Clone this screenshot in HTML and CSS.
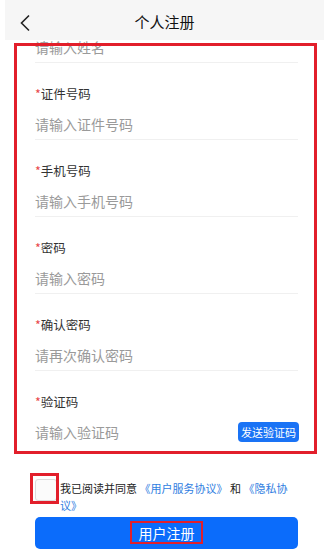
FILE: index.html
```html
<!DOCTYPE html>
<html>
<head>
    <meta charset="utf-8">
    <title>个人注册</title>
    <link rel="stylesheet" href="styles.css">
</head>
<body>
    <div class="page">

        <div class="header">
            <span class="back">
                <svg width="12" height="18" viewBox="0 0 12 18">
                    <polyline points="10,1.5 2.5,9 10,16.5" fill="none" stroke="#222" stroke-width="1.6"/>
                </svg>
            </span>
            <span class="title">个人注册</span>
        </div>

        <div class="scroll">
            <div class="form">
                <div class="field">
                    <div class="label"><span class="star">*</span>姓名</div>
                    <input type="text" class="input" placeholder="请输入姓名">
                </div>
                <div class="field">
                    <div class="label"><span class="star">*</span>证件号码</div>
                    <input type="text" class="input" placeholder="请输入证件号码">
                </div>
                <div class="field">
                    <div class="label"><span class="star">*</span>手机号码</div>
                    <input type="text" class="input" placeholder="请输入手机号码">
                </div>
                <div class="field">
                    <div class="label"><span class="star">*</span>密码</div>
                    <input type="password" class="input" placeholder="请输入密码">
                </div>
                <div class="field">
                    <div class="label"><span class="star">*</span>确认密码</div>
                    <input type="password" class="input" placeholder="请再次确认密码">
                </div>
                <div class="field last">
                    <div class="label"><span class="star">*</span>验证码</div>
                    <div class="code-row">
                        <input type="text" class="input" placeholder="请输入验证码">
                        <button class="send-btn">发送验证码</button>
                    </div>
                </div>
            </div>
        </div>

        <div class="agree">
            <span class="checkbox"></span>
            <p class="agree-text">我已阅读并同意 <a class="link">《用户服务协议》</a> 和 <a class="link">《隐私协议》</a></p>
        </div>

        <button class="submit"><span class="submit-text">用户注册</span></button>

        <!-- red annotation frames -->
        <div class="mark mark-form"></div>
        <div class="mark mark-check"></div>
        <div class="mark mark-submit"></div>

    </div>
</body>
</html>
```

FILE: styles.css
```css
body
{
    margin: 0;
    background: #fff;
    font-family: "Noto Sans CJK SC", "Noto Sans", sans-serif;
    color: #333;
}

.page
{
    position: relative;
    width: 329px;
    height: 560px;
    overflow: hidden;
}

.header
{
    position: relative;
    height: 40px;
    margin: 0 5px;
    background-color: #f6f6f6;
    display: flex;
    align-items: center;
    justify-content: center;
}

.back
{
    position: absolute;
    left: 14px;
    top: 14px;
    display: flex;
}

.title
{
    font-size: 15px;
    color: #111;
    line-height: 20px;
    margin-top: 4px;
}

.scroll
{
    height: 420px;
    overflow: hidden;
}

.form
{
    margin-top: -54px;
    padding: 0 31px 0 35px;
}

.field
{
    padding-top: 21px;
    border-bottom: 1px solid #f0f0f0;
}

.field.last
{
    border-bottom-color: transparent;
}

.label
{
    font-size: 12.5px;
    line-height: 20px;
    color: #333;
}

.star
{
    color: #e8454a;
}

.input
{
    display: block;
    width: 100%;
    height: 30px;
    margin-top: 5px;
    padding: 0;
    border: none;
    outline: none;
    background: transparent;
    font-family: "Noto Sans CJK SC", "Noto Sans", sans-serif;
    font-size: 14px;
    color: #333;
}

.input::placeholder
{
    color: #9a9a9a;
}

.code-row
{
    display: flex;
    align-items: center;
    margin-top: 5px;
}

.code-row .input
{
    flex: 1;
    margin-top: 0;
}

.send-btn
{
    height: 20px;
    padding: 0 3px;
    margin-right: -1px;
    border: none;
    border-radius: 4px;
    background-color: #1a73f5;
    color: #fff;
    font-family: "Noto Sans CJK SC", "Noto Sans", sans-serif;
    font-size: 11px;
    line-height: 20px;
}

.agree
{
    display: flex;
    align-items: flex-start;
    margin-top: 19px;
    padding: 0 33px 0 35px;
}

.checkbox
{
    flex: none;
    width: 20px;
    height: 20px;
    border: 1px solid #dcdcdc;
    border-radius: 3px;
    background-color: #fbfbfb;
}

.agree-text
{
    margin: 1px 0 0 3px;
    font-size: 11px;
    line-height: 17px;
    color: #222;
}

.link
{
    color: #2f7de1;
}

.submit
{
    display: block;
    width: 263px;
    height: 32px;
    margin: 3px 0 0 35px;
    border: none;
    border-radius: 5px;
    background-color: #0b6cfb;
    color: #fff;
    font-family: "Noto Sans CJK SC", "Noto Sans", sans-serif;
    font-size: 14px;
}

.mark
{
    position: absolute;
    border: 3px solid #e21f2b;
    box-sizing: border-box;
}

.mark-form
{
    left: 14px;
    top: 43px;
    width: 303px;
    height: 411px;
}

.mark-check
{
    left: 30px;
    top: 473px;
    width: 29px;
    height: 31px;
}

.mark-submit
{
    left: 130px;
    top: 521px;
    width: 73px;
    height: 23px;
    border-width: 2px;
}
```
